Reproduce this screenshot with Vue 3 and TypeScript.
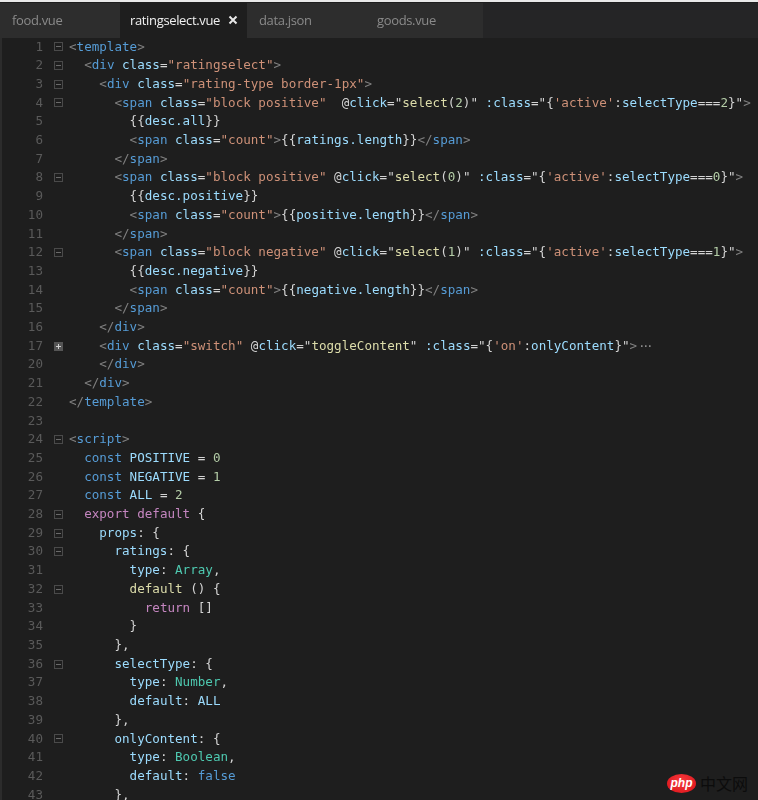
<script setup lang="ts">
interface Seg { c: string; t: string }
interface Row { n: number; fold: string; segs: Seg[] }

const src: [number, string, string][] = [
  [1, '-', 'g<|ntemplate|g>'],
  [2, '-', 'x  |g<|ndiv|x |aclass|x=|s"ratingselect"|g>'],
  [3, '-', 'x    |g<|ndiv|x |aclass|x=|s"rating-type border-1px"|g>'],
  [4, '-', 'x      |g<|nspan|x |aclass|x=|s"block positive"|x  @|aclick|x=|x"|fselect|x(|m2|x)|x" |a:class|x=|x"{|s\'active\'|x:|aselectType|x===|m2|x}"|g>'],
  [5, '', 'x        {{|adesc.all|x}}'],
  [6, '', 'x        |g<|nspan|x |aclass|x=|s"count"|g>|x{{|aratings.length|x}}|g</|nspan|g>'],
  [7, '', 'x      |g</|nspan|g>'],
  [8, '-', 'x      |g<|nspan|x |aclass|x=|s"block positive"|x @|aclick|x=|x"|fselect|x(|m0|x)|x" |a:class|x=|x"{|s\'active\'|x:|aselectType|x===|m0|x}"|g>'],
  [9, '', 'x        {{|adesc.positive|x}}'],
  [10, '', 'x        |g<|nspan|x |aclass|x=|s"count"|g>|x{{|apositive.length|x}}|g</|nspan|g>'],
  [11, '', 'x      |g</|nspan|g>'],
  [12, '-', 'x      |g<|nspan|x |aclass|x=|s"block negative"|x @|aclick|x=|x"|fselect|x(|m1|x)|x" |a:class|x=|x"{|s\'active\'|x:|aselectType|x===|m1|x}"|g>'],
  [13, '', 'x        {{|adesc.negative|x}}'],
  [14, '', 'x        |g<|nspan|x |aclass|x=|s"count"|g>|x{{|anegative.length|x}}|g</|nspan|g>'],
  [15, '', 'x      |g</|nspan|g>'],
  [16, '', 'x    |g</|ndiv|g>'],
  [17, '+', 'x    |g<|ndiv|x |aclass|x=|s"switch"|x @|aclick|x=|x"|ftoggleContent|x" |a:class|x=|x"{|s\'on\'|x:|aonlyContent|x}"|g>|d···'],
  [20, '', 'x    |g</|ndiv|g>'],
  [21, '', 'x  |g</|ndiv|g>'],
  [22, '', 'g</|ntemplate|g>'],
  [23, '', ''],
  [24, '-', 'g<|nscript|g>'],
  [25, '', 'x  |nconst|x |aPOSITIVE|x = |m0'],
  [26, '', 'x  |nconst|x |aNEGATIVE|x = |m1'],
  [27, '', 'x  |nconst|x |aALL|x = |m2'],
  [28, '-', 'x  |kexport default|x {'],
  [29, '-', 'x    |aprops|x: {'],
  [30, '-', 'x      |aratings|x: {'],
  [31, '', 'x        |atype|x: |yArray|x,'],
  [32, '-', 'x        |fdefault|x () {'],
  [33, '', 'x          |kreturn|x []'],
  [34, '', 'x        }'],
  [35, '', 'x      },'],
  [36, '-', 'x      |aselectType|x: {'],
  [37, '', 'x        |atype|x: |yNumber|x,'],
  [38, '', 'x        |adefault|x: |aALL'],
  [39, '', 'x      },'],
  [40, '-', 'x      |aonlyContent|x: {'],
  [41, '', 'x        |atype|x: |yBoolean|x,'],
  [42, '', 'x        |adefault|x: |nfalse'],
  [43, '', 'x      },'],
]

const rows: Row[] = src.map(([n, fold, s]) => ({
  n,
  fold,
  segs: s ? s.split('|').map((p) => ({ c: p[0], t: p.slice(1) })) : [],
}))

const tabs = [
  { name: 'food.vue', active: false },
  { name: 'ratingselect.vue', active: true },
  { name: 'data.json', active: false },
  { name: 'goods.vue', active: false },
]
</script>

<template>
  <div class="window">
    <div class="tabbar">
      <div v-for="tab in tabs" :key="tab.name" class="tab" :class="{ active: tab.active }">
        <span>{{ tab.name }}</span>
        <svg v-if="tab.active" class="close" width="10" height="10" viewBox="0 0 10 10">
          <path d="M1.5 1.5 8.5 8.5M8.5 1.5 1.5 8.5" stroke="#e8e8e8" stroke-width="2" fill="none" />
        </svg>
      </div>
    </div>
    <div class="editor">
      <div v-for="row in rows" :key="row.n" class="row">
        <span class="num">{{ row.n }}</span>
        <span class="gutter">
          <svg v-if="row.fold === '-'" width="9" height="9" viewBox="0 0 9 9">
            <rect x="0.5" y="0.5" width="8" height="8" fill="none" stroke="#4a4a4a" />
            <path d="M2 4.5H7" stroke="#6a6a6a" />
          </svg>
          <svg v-else-if="row.fold === '+'" width="9" height="9" viewBox="0 0 9 9">
            <rect width="9" height="9" fill="#555" />
            <path d="M2 4.5H7M4.5 2V7" stroke="#d0d0d0" />
          </svg>
        </span>
        <span class="code"><span v-for="(s, i) in row.segs" :key="i" :class="'c-' + s.c">{{ s.t }}</span></span>
      </div>
    </div>
    <div class="mark">
      <span class="php">php</span>
      <span class="cn">中文网</span>
    </div>
  </div>
</template>

<style scoped>
.window {
  position: relative;
  width: 758px;
  height: 800px;
  overflow: hidden;
  background: #1e1e1e;
  border-top: 2px solid #e9e9e9;
  box-sizing: border-box;
}
.tabbar {
  display: flex;
  height: 35px;
  margin-top: 1px;
  background: #252526;
  filter: blur(0.3px);
}
.tab {
  width: 118px;
  box-sizing: border-box;
  padding-left: 12px;
  display: flex;
  align-items: center;
  background: #2d2d2d;
  color: #8a8a8a;
  font: 13px "Open Sans", sans-serif;
  letter-spacing: -0.35px;
  padding-bottom: 2px;
}
.tab:first-child {
  width: 120px;
}
.tab.active {
  width: 127px;
  padding-left: 10px;
  background: #1e1e1e;
  color: #f0f0f0;
}
.close {
  margin-left: 8px;
  margin-top: 1px;
}
.editor {
  margin-top: -0.5px;
  border-left: 2px solid #2c2c2c;
  filter: blur(0.3px);
}
.row {
  display: flex;
  height: 18.71px;
  font: 12.59px/18.71px "DejaVu Sans Mono", monospace;
  white-space: pre;
}
.num {
  width: 41px;
  text-align: right;
  color: #5a5a5a;
  flex: none;
}
.gutter {
  width: 26px;
  flex: none;
  display: flex;
  align-items: center;
  padding-left: 11px;
  box-sizing: border-box;
}
.code { color: #d4d4d4; }
.c-x { color: #d4d4d4; }
.c-g { color: #808080; }
.c-n { color: #569cd6; }
.c-a { color: #9cdcfe; }
.c-s { color: #ce9178; }
.c-f { color: #dcdcaa; }
.c-k { color: #c586c0; }
.c-y { color: #4ec9b0; }
.c-m { color: #b5cea8; }
.c-d {
  color: #8a8a8a;
  margin-left: 1px;
  letter-spacing: -3.6px;
}
.mark {
  position: absolute;
  left: 667px;
  top: 769px;
  display: flex;
  align-items: center;
  gap: 4px;
}
.php {
  width: 29px;
  height: 19px;
  border-radius: 50%;
  background: radial-gradient(ellipse at 50% 35%, #f8383c, #d81218);
  color: #fff;
  font: italic 700 12px/18px "Liberation Sans", sans-serif;
  text-align: center;
}
.cn {
  color: #0c0c0c;
  font: 16px "Noto Sans CJK SC", sans-serif;
}
</style>

<style>
body {
  margin: 0;
  background: #1e1e1e;
}
</style>
